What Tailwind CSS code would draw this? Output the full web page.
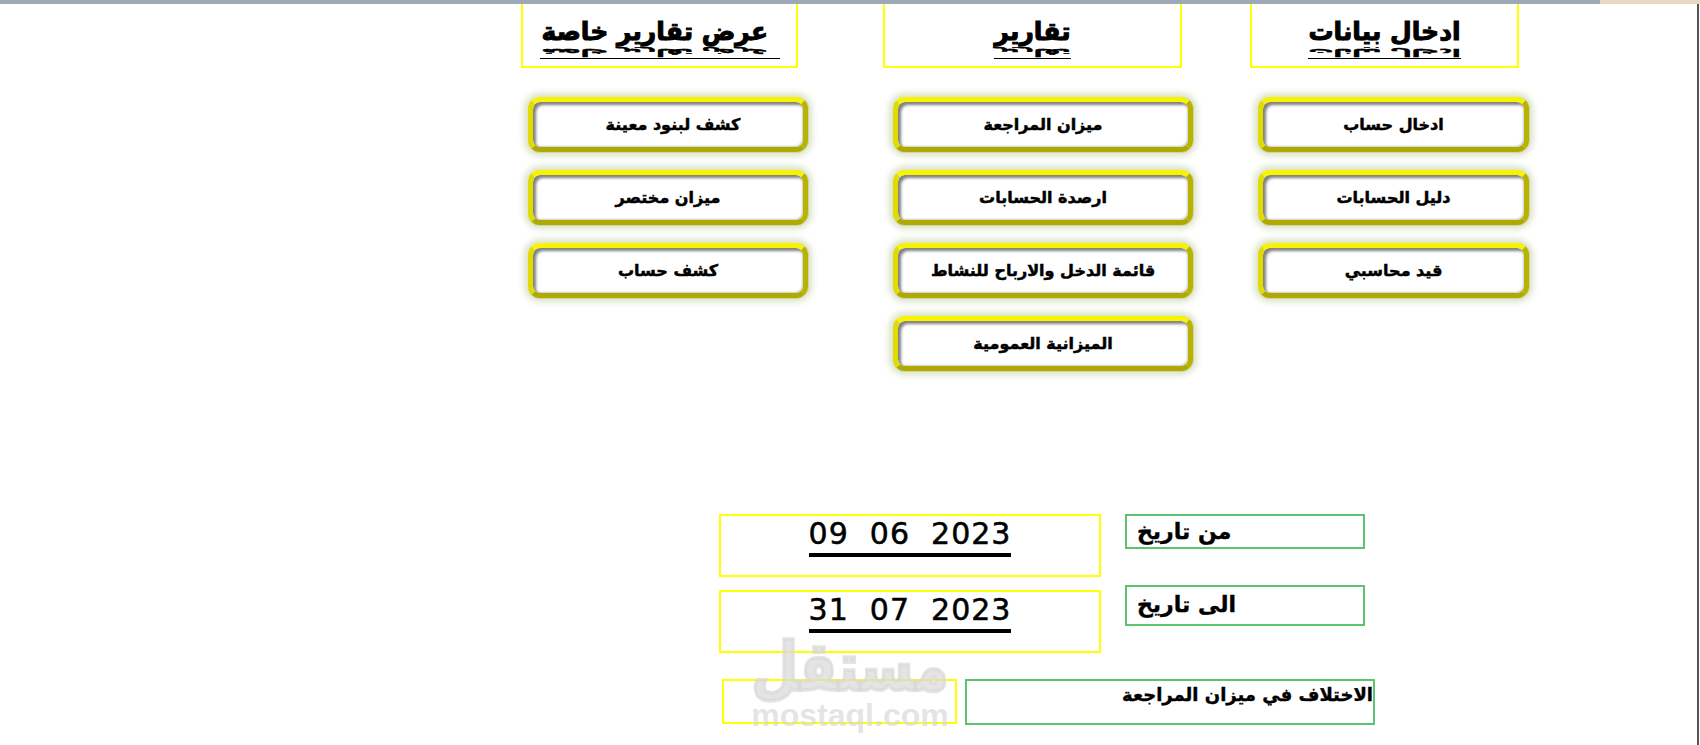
<!DOCTYPE html>
<html lang="ar">
<head>
    <meta charset="UTF-8">
    <title>ميزان المراجعة</title>
    <script src="https://cdn.jsdelivr.net/npm/@tailwindcss/browser@4"></script>
</head>
<body class="bg-white font-['DejaVu_Sans',sans-serif] text-black overflow-hidden">
<div class="relative h-[745px] w-[1700px] overflow-hidden">

    <!-- top strip -->
    <div class="flex h-[4px]">
        <div class="w-[1600px] bg-[#a0a8b4]"></div>
        <div class="flex-1 bg-[#e8d8c4]"></div>
    </div>

    <div class="mr-[1px] h-[741px] border-r-2 border-r-[#555]">

    <!-- menu columns -->
    <div class="flex items-start pl-[521px]">

        <div class="w-[287px] mr-[75px]">
            <div class="flex h-[64px] w-[277px] flex-col items-center border-2 border-t-0 border-[#ffff00] pt-[14px]">
                <div class="w-[240px] border-b border-black text-left text-[25px] leading-[28px] font-bold [-webkit-text-stroke:1px_black]" dir="rtl">
                    <div class="pl-[2px]">عرض تقارير خاصة</div>
                    <div aria-hidden="true" class="h-[12px] pl-[2px] leading-[12px] scale-y-[-0.4]">عرض تقارير خاصة</div>
                </div>
            </div>
            <div class="mt-[29px] ml-[7px] flex flex-col gap-[18px]">
                <div class="flex h-[55px] w-[280px] items-center justify-center rounded-[12px] border-[5px] border-t-[#f8f400] border-l-[#e0dc00] border-r-[#b8b200] border-b-[#b0aa00] bg-white pl-[10px] text-[16px] font-bold [-webkit-text-stroke:0.5px_black] shadow-[0_0_6px_4px_#dbe3c6,0_1px_0_#8f8a00,1px_0_0_#8f8a00,inset_3px_3px_3px_#808080,inset_-1px_-1px_2px_#ccc]" dir="rtl">كشف لبنود معينة</div>
                <div class="flex h-[55px] w-[280px] items-center justify-center rounded-[12px] border-[5px] border-t-[#f8f400] border-l-[#e0dc00] border-r-[#b8b200] border-b-[#b0aa00] bg-white text-[16px] font-bold [-webkit-text-stroke:0.5px_black] shadow-[0_0_6px_4px_#dbe3c6,0_1px_0_#8f8a00,1px_0_0_#8f8a00,inset_3px_3px_3px_#808080,inset_-1px_-1px_2px_#ccc]" dir="rtl">ميزان مختصر</div>
                <div class="flex h-[55px] w-[280px] items-center justify-center rounded-[12px] border-[5px] border-t-[#f8f400] border-l-[#e0dc00] border-r-[#b8b200] border-b-[#b0aa00] bg-white text-[16px] font-bold [-webkit-text-stroke:0.5px_black] shadow-[0_0_6px_4px_#dbe3c6,0_1px_0_#8f8a00,1px_0_0_#8f8a00,inset_3px_3px_3px_#808080,inset_-1px_-1px_2px_#ccc]" dir="rtl">كشف حساب</div>
            </div>
        </div>

        <div class="w-[310px] mr-[57px]">
            <div class="flex h-[64px] w-[299px] flex-col items-center border-2 border-t-0 border-[#ffff00] pt-[14px]">
                <div class="border-b border-black text-[25px] leading-[28px] font-bold [-webkit-text-stroke:1px_black]" dir="rtl">
                    <div>تقارير</div>
                    <div aria-hidden="true" class="h-[12px] leading-[12px] scale-y-[-0.4]">تقارير</div>
                </div>
            </div>
            <div class="mt-[29px] ml-[10px] flex flex-col gap-[18px]">
                <div class="flex h-[55px] w-[300px] items-center justify-center rounded-[12px] border-[5px] border-t-[#f8f400] border-l-[#e0dc00] border-r-[#b8b200] border-b-[#b0aa00] bg-white text-[16px] font-bold [-webkit-text-stroke:0.5px_black] shadow-[0_0_6px_4px_#dbe3c6,0_1px_0_#8f8a00,1px_0_0_#8f8a00,inset_3px_3px_3px_#808080,inset_-1px_-1px_2px_#ccc]" dir="rtl">ميزان المراجعة</div>
                <div class="flex h-[55px] w-[300px] items-center justify-center rounded-[12px] border-[5px] border-t-[#f8f400] border-l-[#e0dc00] border-r-[#b8b200] border-b-[#b0aa00] bg-white text-[16px] font-bold [-webkit-text-stroke:0.5px_black] shadow-[0_0_6px_4px_#dbe3c6,0_1px_0_#8f8a00,1px_0_0_#8f8a00,inset_3px_3px_3px_#808080,inset_-1px_-1px_2px_#ccc]" dir="rtl">ارصدة الحسابات</div>
                <div class="flex h-[55px] w-[300px] items-center justify-center rounded-[12px] border-[5px] border-t-[#f8f400] border-l-[#e0dc00] border-r-[#b8b200] border-b-[#b0aa00] bg-white text-[16px] font-bold [-webkit-text-stroke:0.5px_black] shadow-[0_0_6px_4px_#dbe3c6,0_1px_0_#8f8a00,1px_0_0_#8f8a00,inset_3px_3px_3px_#808080,inset_-1px_-1px_2px_#ccc]" dir="rtl">قائمة الدخل والارباح للنشاط</div>
                <div class="flex h-[55px] w-[300px] items-center justify-center rounded-[12px] border-[5px] border-t-[#f8f400] border-l-[#e0dc00] border-r-[#b8b200] border-b-[#b0aa00] bg-white text-[16px] font-bold [-webkit-text-stroke:0.5px_black] shadow-[0_0_6px_4px_#dbe3c6,0_1px_0_#8f8a00,1px_0_0_#8f8a00,inset_3px_3px_3px_#808080,inset_-1px_-1px_2px_#ccc]" dir="rtl">الميزانية العمومية</div>
            </div>
        </div>

        <div class="w-[280px]">
            <div class="flex h-[64px] w-[269px] flex-col items-center border-2 border-t-0 border-[#ffff00] pt-[14px]">
                <div class="border-b border-black text-[25px] leading-[28px] font-bold [-webkit-text-stroke:1px_black]" dir="rtl">
                    <div>ادخال بيانات</div>
                    <div aria-hidden="true" class="h-[12px] leading-[12px] scale-y-[-0.4]">ادخال بيانات</div>
                </div>
            </div>
            <div class="mt-[29px] ml-[8px] flex flex-col gap-[18px]">
                <div class="flex h-[55px] w-[271px] items-center justify-center rounded-[12px] border-[5px] border-t-[#f8f400] border-l-[#e0dc00] border-r-[#b8b200] border-b-[#b0aa00] bg-white text-[16px] font-bold [-webkit-text-stroke:0.5px_black] shadow-[0_0_6px_4px_#dbe3c6,0_1px_0_#8f8a00,1px_0_0_#8f8a00,inset_3px_3px_3px_#808080,inset_-1px_-1px_2px_#ccc]" dir="rtl">ادخال حساب</div>
                <div class="flex h-[55px] w-[271px] items-center justify-center rounded-[12px] border-[5px] border-t-[#f8f400] border-l-[#e0dc00] border-r-[#b8b200] border-b-[#b0aa00] bg-white text-[16px] font-bold [-webkit-text-stroke:0.5px_black] shadow-[0_0_6px_4px_#dbe3c6,0_1px_0_#8f8a00,1px_0_0_#8f8a00,inset_3px_3px_3px_#808080,inset_-1px_-1px_2px_#ccc]" dir="rtl">دليل الحسابات</div>
                <div class="flex h-[55px] w-[271px] items-center justify-center rounded-[12px] border-[5px] border-t-[#f8f400] border-l-[#e0dc00] border-r-[#b8b200] border-b-[#b0aa00] bg-white text-[16px] font-bold [-webkit-text-stroke:0.5px_black] shadow-[0_0_6px_4px_#dbe3c6,0_1px_0_#8f8a00,1px_0_0_#8f8a00,inset_3px_3px_3px_#808080,inset_-1px_-1px_2px_#ccc]" dir="rtl">قيد محاسبي</div>
            </div>
        </div>
    </div>

    <!-- date fields -->
    <div class="mt-[143px] flex flex-col pl-[719px]">
        <div class="flex items-start">
            <div class="flex h-[63px] w-[382px] justify-center border-2 border-[#ffff00]">
                <span class="mt-[-1px] h-[42px] border-b-[4px] border-black text-[30px] leading-[38px] tracking-[1px] whitespace-pre [-webkit-text-stroke:0.5px_black]">09  06  2023</span>
            </div>
            <div class="ml-[24px] h-[35px] w-[240px] border-2 border-[#5cc46f] pl-[10px] text-[22px] leading-[32px] font-bold [-webkit-text-stroke:0.4px_black]" dir="ltr">من تاريخ</div>
        </div>
        <div class="mt-[13px] flex items-start">
            <div class="flex h-[63px] w-[382px] justify-center border-2 border-[#ffff00]">
                <span class="mt-[-1px] h-[42px] border-b-[4px] border-black text-[30px] leading-[38px] tracking-[1px] whitespace-pre [-webkit-text-stroke:0.5px_black]">31  07  2023</span>
            </div>
            <div class="ml-[24px] mt-[-5px] h-[41px] w-[240px] border-2 border-[#5cc46f] pl-[10px] text-[22px] leading-[36px] font-bold [-webkit-text-stroke:0.4px_black]" dir="ltr">الى تاريخ</div>
        </div>
        <div class="mt-[26px] ml-[3px] flex items-start">
            <div class="h-[45px] w-[235px] border-2 border-[#ffff00]"></div>
            <div class="ml-[8px] h-[46px] w-[410px] border-2 border-[#5cc46f] text-[18px] leading-[28px] font-bold [-webkit-text-stroke:0.4px_black]" dir="rtl">الاختلاف في ميزان  المراجعة</div>
        </div>
    </div>

    </div>

    <!-- watermark -->
    <div class="pointer-events-none absolute left-[750px] top-[634px] flex w-[200px] flex-col items-center font-bold text-[#d9d9d9]/70">
        <span class="h-[66px] scale-y-125 text-[54px] leading-[66px] [-webkit-text-stroke:3px_#d9d9d9b3]">مستقل</span>
        <span class="font-['Liberation_Sans',sans-serif] text-[32px] leading-[30px]">mostaql.com</span>
    </div>
</div>
</body>
</html>
